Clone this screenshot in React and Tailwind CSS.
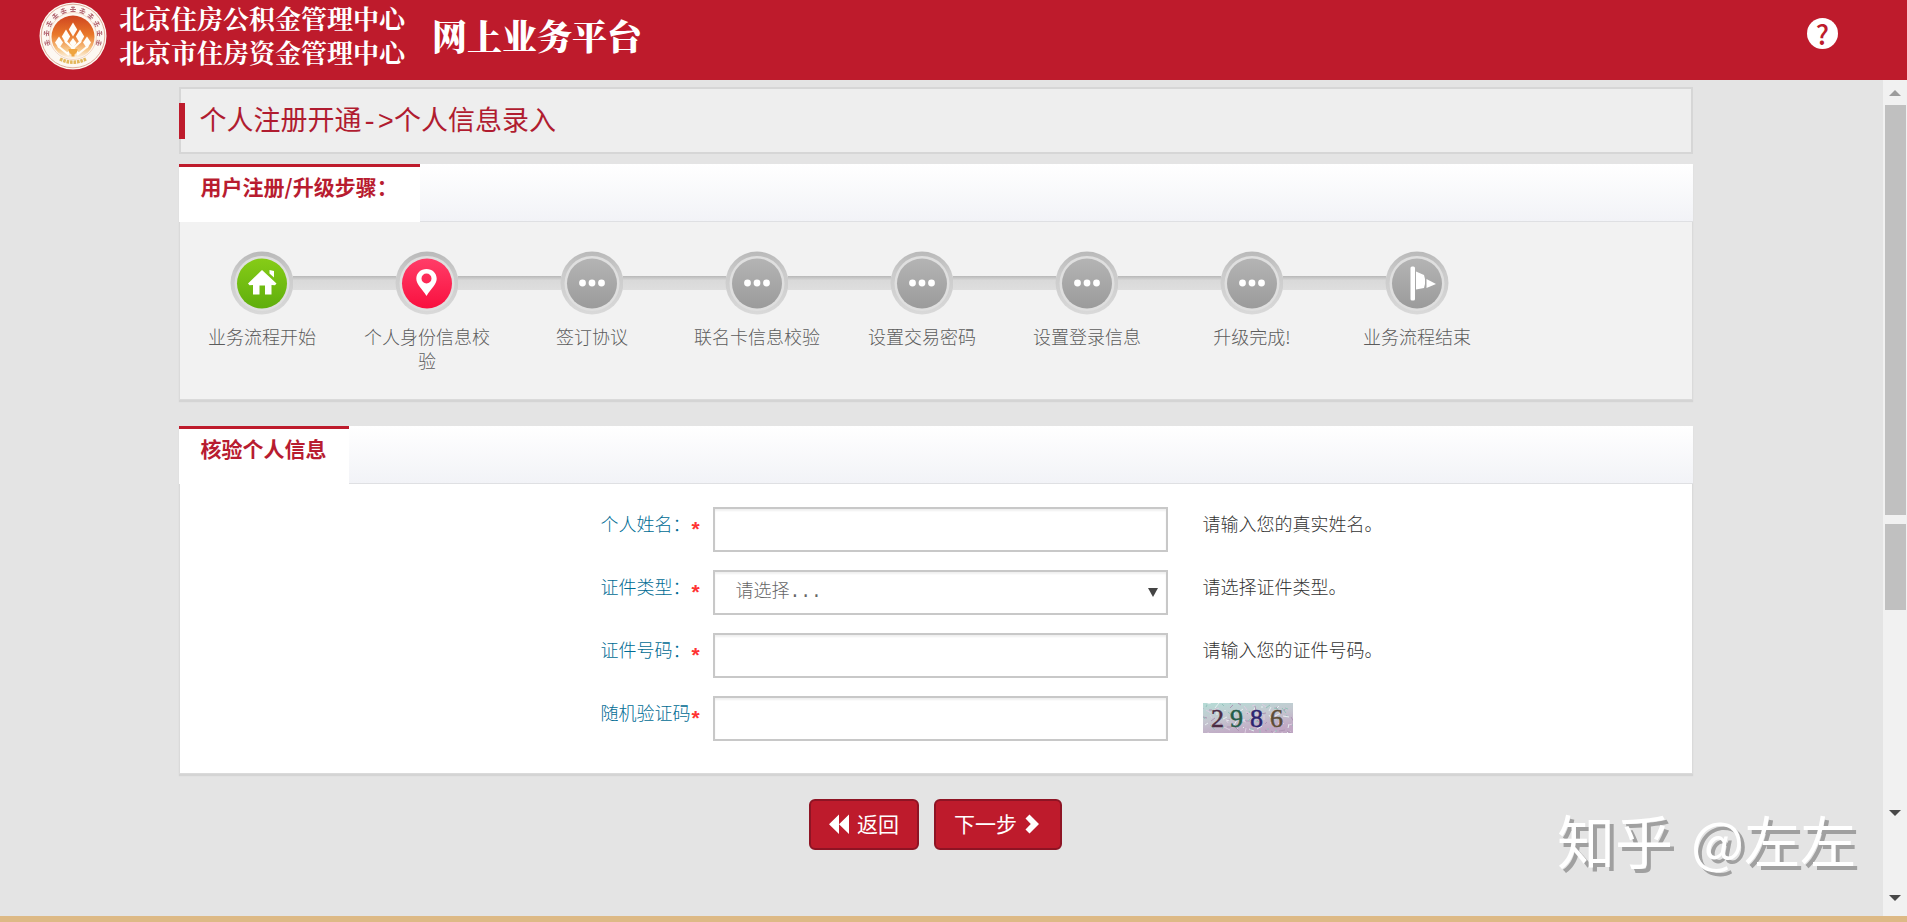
import React from "react";

const STEPS = [
  { label: "业务流程开始", kind: "home" },
  { label: "个人身份信息校验", kind: "pin" },
  { label: "签订协议", kind: "dots" },
  { label: "联名卡信息校验", kind: "dots" },
  { label: "设置交易密码", kind: "dots" },
  { label: "设置登录信息", kind: "dots" },
  { label: "升级完成!", kind: "dots" },
  { label: "业务流程结束", kind: "flag" },
];

const FILLS = {
  home: ["#86cc17", "#5fae0c"],
  pin: ["#ff3d68", "#f9103f"],
  dots: ["#b4b4b4", "#9b9b9b"],
  flag: ["#b4b4b4", "#9b9b9b"],
};

function Emblem() {
  const ring = Array.from({ length: 11 }, (_, i) => -195 + i * 21);
  return (
    <svg viewBox="0 0 68 68" className="size-[68px] shrink-0" aria-hidden="true">
      <defs>
        <linearGradient id="sun" x1="0" y1="0" x2="0" y2="1">
          <stop offset="0" stopColor="#cf4420" />
          <stop offset="0.45" stopColor="#e9782a" />
          <stop offset="0.8" stopColor="#f8c98c" />
          <stop offset="1" stopColor="#fdf6ee" />
        </linearGradient>
      </defs>
      <circle cx="34" cy="34" r="33.5" fill="#fdf8f2" />
      <circle cx="34" cy="34" r="31.8" fill="none" stroke="#d9a48f" strokeWidth="0.9" />
      {ring.map((a) => (
        <g key={a} transform={`rotate(${a} 34 34)`} stroke="#a8505e" strokeWidth="1" opacity="0.85">
          <path d="M58.500 31.500v5M60.500 31v6M62.700 32v4M58 34h5.500" />
        </g>
      ))}
      <circle cx="34" cy="34" r="23.500" fill="none" stroke="#ecc9b4" strokeWidth="0.7" />
      <circle cx="34" cy="35" r="21.500" fill="url(#sun)" />
      <g fill="#fffdf8">
        <path d="M34 20.500l4.200 7-4.200 7-4.200-7z" />
        <path d="M27 27.500l4.200 7-4.200 7-4.200-7z" />
        <path d="M41 27.500l4.200 7-4.200 7-4.200-7z" />
        <path d="M20 34.500l4 6-4 6-4-6z" />
        <path d="M48 34.500l4 6-4 6-4-6z" />
        <path d="M34 36l3.500 5-3.500 5-3.500-5z" />
      </g>
      <path d="M26 39l14 13M42 39L28 52M19 44l11 9M49 44l-11 9" stroke="#fffdf8" strokeWidth="2.200" />
      <path d="M29.500 47h9c0 4-1.500 4-3 5.500v2h-3v-2c-1.500-1.500-3-1.500-3-5.500z" fill="#efa440" />
      <path d="M21 57q13 6.500 26 0" fill="none" stroke="#e3b75c" strokeWidth="3.500" strokeDasharray="2.600 0.900" />
    </svg>
  );
}

function StepIcon({ kind }) {
  const id = `fill-${kind}`;
  const [top, bottom] = FILLS[kind];
  return (
    <svg viewBox="0 0 64 64" className="-mx-px size-16 shrink-0" aria-hidden="true">
      <defs>
        <linearGradient id={id} x1="0" y1="0" x2="0" y2="1">
          <stop offset="0" stopColor={top} />
          <stop offset="1" stopColor={bottom} />
        </linearGradient>
        <linearGradient id={`${id}-rim`} x1="0" y1="0" x2="0" y2="1">
          <stop offset="0" stopColor="#b9b9b9" />
          <stop offset="0.35" stopColor="#cbcbcb" />
          <stop offset="1" stopColor="#d9d9d9" />
        </linearGradient>
      </defs>
      <circle cx="32" cy="32" r="31.5" fill={`url(#${id}-rim)`} />
      <circle cx="32" cy="32.5" r="27.5" fill="#dfdfdf" />
      <circle cx="32" cy="32.5" r="25" fill={`url(#${id})`} />
      {kind === "home" && (
        <path fill="#fff" d="M32 19l14.5 13.5-1.5 1.8-3.500-.3v9.500h-6.500v-9h-5.500v9h-6.500v-9.500l-3.500.3-1.500-1.800zM39.500 19l4.500 1v6.500l-4.500-4z" />
      )}
      {kind === "pin" && (
        <path fill="#fff" fillRule="evenodd" d="M31.500 18c5.800 0 10.200 4.200 10.200 9.700 0 5.800-5.700 9.600-10.200 17.300-4.500-7.700-10.200-11.500-10.200-17.300 0-5.500 4.400-9.700 10.200-9.700zM31.500 22.500a5 5 0 1 0 0 10 5 5 0 0 0 0-10z" />
      )}
      {kind === "dots" && (
        <g fill="#fff">
          <circle cx="22.500" cy="32" r="3.400" />
          <circle cx="32" cy="32" r="3.400" />
          <circle cx="41.500" cy="32" r="3.400" />
        </g>
      )}
      {kind === "flag" && (
        <g fill="#fff">
          <rect x="25.500" y="15.500" width="4.500" height="34" rx="1.500" />
          <path d="M31 20.500l8 3.500 1 4v5l-1 4-8 1.500z" />
          <path d="M41.500 28l9.500 5-9.500 4z" />
        </g>
      )}
    </svg>
  );
}

function Connector({ hidden }) {
  return (
    <span
      className={
        hidden
          ? "h-[14px] flex-1"
          : "h-[14px] flex-1 bg-linear-to-b from-[#b8b8b8] via-[#d9d9d9] via-30% to-[#dedede]"
      }
    />
  );
}

function Panel({ title, bodyClass, children }) {
  return (
    <section className="border border-[#dadada] border-t-[#e0e0e0] shadow-[0_2px_1px_#d4d4d4]">
      <div className="-mx-px -mt-px flex h-[58px] border-b border-[#dfe0e3] bg-linear-to-b from-white to-[#f2f3f7]">
        <h2 className="-mb-px border-t-3 border-[#be1b2c] bg-white px-[22px] pt-[4px] text-[21px] leading-[30px] font-bold text-[#b81c30]">
          {title}
        </h2>
      </div>
      <div className={bodyClass}>{children}</div>
    </section>
  );
}

function Row({ id, label, hint, children }) {
  return (
    <div className="grid grid-cols-[533fr_455fr_524fr]">
      <label htmlFor={id} className="flex justify-end pt-[3px] leading-[26px] text-[#006c94]">
        <span className="w-[91px] whitespace-nowrap">{label}</span>
        <span className="w-[21px] pt-[6px] font-['Liberation_Sans'] text-[21px] font-bold text-[#f33]">*</span>
      </label>
      {children}
      <div className="pt-[3px] pl-[35px] leading-[26px] text-[#333]">{hint}</div>
    </div>
  );
}

const FIELD =
  "h-[45px] w-full rounded-none border-2 border-[#c8c8c8] bg-white px-[21px] text-[18px] shadow-[inset_0_2px_2px_#f0f0f0] outline-none";

function Captcha() {
  return (
    <svg viewBox="0 0 90 30" className="mt-[4px] block h-[30px] w-[90px]" role="img" aria-label="2986">
      <defs>
        <linearGradient id="cap" x1="0" y1="0" x2="0.4" y2="1">
          <stop offset="0" stopColor="#b5dcd6" />
          <stop offset="0.5" stopColor="#c4c8d0" />
          <stop offset="1" stopColor="#c0a8c4" />
        </linearGradient>
      </defs>
      <rect width="90" height="30" fill="url(#cap)" />
      {Array.from({ length: 110 }, (_, i) => {
        const x = (i * 37) % 90;
        const y = (i * 17 + (i % 7)) % 30;
        const colors = ["#e6eef0", "#93c2ba", "#ae94b4", "#dccbe0"];
        return (
          <path key={i} d={`M${x} ${y}l${((i * 7) % 11) - 4} ${((i * 5) % 9) - 3}`} stroke={colors[i % 4]} strokeWidth="1" />
        );
      })}
      <g fontFamily="Liberation Serif, serif" fontSize="26" strokeWidth="0.5">
        <text x="8" y="24" fill="#4a2c44" stroke="#4a2c44">2</text>
        <text x="27" y="24" fill="#245c48" stroke="#245c48">9</text>
        <text x="47" y="24" fill="#2c2470" stroke="#2c2470">8</text>
        <text x="67" y="24" fill="#5c4c34" stroke="#5c4c34">6</text>
      </g>
    </svg>
  );
}

function Arrow({ up }) {
  return (
    <svg viewBox="0 0 12 6" className="h-[6px] w-[12px]" aria-hidden="true">
      {up ? <path d="M6 0l6 6H0z" fill="#9c9c9c" /> : <path d="M0 0h12L6 6z" fill="#484848" />}
    </svg>
  );
}

function ScrollRail() {
  return (
    <div className="flex w-6 shrink-0 flex-col items-center bg-[#f1f1f1]" aria-hidden="true">
      <div className="flex h-[25px] items-center">
        <Arrow up />
      </div>
      <div className="h-[410px] w-[21px] bg-[#c0c0c0]" />
      <div className="mt-[9px] h-[86px] w-[21px] bg-[#c0c0c0]" />
      <div className="flex-1" />
      <Arrow />
      <div className="mt-[79px] mb-[15px] flex">
        <Arrow />
      </div>
    </div>
  );
}

export default function App() {
  return (
    <div className="flex min-h-screen flex-col bg-[#e4e4e4] font-['Noto_Sans_CJK_SC',sans-serif] text-[18px]">
      <header className="flex h-20 items-start bg-[#be1b2c] pl-[39px] text-white">
        <div className="pt-[2px]">
          <Emblem />
        </div>
        <div className="ml-3 pt-px font-['Noto_Serif_CJK_SC','Noto_Sans_CJK_SC',serif] text-[26px] leading-[34px] font-bold whitespace-nowrap">
          <p>北京住房公积金管理中心</p>
          <p>北京市住房资金管理中心</p>
        </div>
        <h1 className="ml-[27px] pt-[10px] font-['Noto_Serif_CJK_SC','Noto_Sans_CJK_SC',serif] text-[35px] leading-[50px] font-black whitespace-nowrap">
          网上业务平台
        </h1>
        <button
          type="button"
          aria-label="帮助"
          className="mt-[18px] mr-[69px] ml-auto flex size-[31px] items-center justify-center rounded-full bg-white text-[27px] leading-none font-medium text-[#be1b2c]"
        >
          ?
        </button>
      </header>

      <div className="flex flex-1">
        <main className="relative flex-1 pt-[7px] pr-3">
          <div className="mx-auto max-w-[1514px]">
            <div className="flex h-[67px] items-center border-2 border-[#d6d6d6] bg-[#eee]">
              <span className="-ml-[2px] h-9 w-[6px] bg-[#be1b2c]" />
              <p className="pl-[15px] text-[27px] leading-9 text-[#b01c30]">
                个人注册开通<span className="font-['Liberation_Mono',monospace]">-&gt;</span>个人信息录入
              </p>
            </div>

            <div className="mt-[10px]">
              <Panel title="用户注册/升级步骤：" bodyClass="bg-[#f2f2f2] pt-[29px] pb-[24px]">
                <ol className="flex">
                  {STEPS.map((s, i) => (
                    <li key={s.label} className="flex w-[165px] flex-col items-center">
                      <div className="flex w-full items-center">
                        <Connector hidden={i === 0} />
                        <StepIcon kind={s.kind} />
                        <Connector hidden={i === STEPS.length - 1} />
                      </div>
                      <span className="mt-[9px] h-[51px] w-[130px] text-center leading-6 font-light text-[#5c5c5c]">
                        {s.label}
                      </span>
                    </li>
                  ))}
                </ol>
              </Panel>
            </div>

            <div className="mt-[26px]">
              <Panel title="核验个人信息" bodyClass="bg-white pt-[23px] pb-8">
                <form className="flex flex-col gap-[18px] font-light">
                  <Row id="name" label="个人姓名：" hint="请输入您的真实姓名。">
                    <input id="name" type="text" className={FIELD} />
                  </Row>
                  <Row id="type" label="证件类型：" hint="请选择证件类型。">
                    <div className="relative">
                      <select
                        id="type"
                        className={`${FIELD} appearance-none font-['Liberation_Mono','Noto_Sans_CJK_SC',monospace] text-[#666]`}
                      >
                        <option>请选择...</option>
                      </select>
                      <svg viewBox="0 0 10 9" className="pointer-events-none absolute top-[18px] right-[10px] h-[9px] w-[10px]" aria-hidden="true">
                        <path d="M0 0h10L5 9z" fill="#444" />
                      </svg>
                    </div>
                  </Row>
                  <Row id="number" label="证件号码：" hint="请输入您的证件号码。">
                    <input id="number" type="text" className={FIELD} />
                  </Row>
                  <Row id="code" label="随机验证码" hint={<Captcha />}>
                    <input id="code" type="text" className={FIELD} />
                  </Row>
                </form>
              </Panel>
            </div>

            <div className="mt-[25px] flex justify-center gap-[15px] text-[21px] text-white">
              <button type="button" className="flex h-[51px] items-center gap-[8px] rounded-[6px] border-2 border-[#8e1424] bg-[#be1b2c] px-[18px] pb-[2px]">
                <svg viewBox="0 0 20 20" className="size-5" aria-hidden="true">
                  <path d="M10 0.500V20L0 10.200zM20 0.500V20L10 10.200z" fill="#fff" />
                </svg>
                返回
              </button>
              <button type="button" className="flex h-[51px] items-center gap-[8px] rounded-[6px] border-2 border-[#8e1424] bg-[#be1b2c] pr-[21px] pb-[2px] pl-[18px]">
                下一步
                <svg viewBox="0 0 14 20" className="h-5 w-[14px]" aria-hidden="true">
                  <path d="M4.500 0.500L14 10l-9.500 9.500L0.500 15.500 5.800 10 0.500 4.500z" fill="#fff" />
                </svg>
              </button>
            </div>
          </div>

          <p className="absolute right-[27px] bottom-[35px] flex items-center gap-[18px] text-[56px] leading-[84px] whitespace-nowrap text-white [text-shadow:4px_4px_0_#a0a0a0]">
            <span className="text-[58px]">知乎</span>
            <span>@左左</span>
          </p>
        </main>
        <ScrollRail />
      </div>
      <div className="h-[6px] bg-[#ddb985]" />
    </div>
  );
}
